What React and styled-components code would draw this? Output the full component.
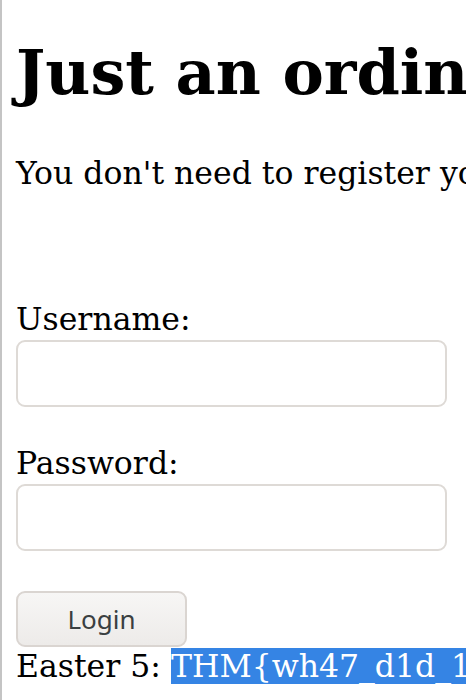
import styled, { createGlobalStyle } from "styled-components";

const GlobalStyle = createGlobalStyle`
  html {
    overflow: hidden;
    background: #ffffff;
    border-left: 2px solid #c4c4c4;
  }
  body {
    margin: 0;
    font-family: "DejaVu Serif", serif;
    color: #000;
  }
`;

const Page = styled.div`
  width: 1400px;
  padding: 0 16px 16px 14px;
`;

const Heading = styled.h1`
  margin: 37px 0 0;
  font-size: 62px;
  line-height: 72px;
  font-weight: bold;
  white-space: nowrap;
`;

const Intro = styled.p`
  margin: 46px 0 0;
  font-size: 31.5px;
  line-height: 37px;
  white-space: nowrap;
`;

const Form = styled.form`
  display: flex;
  flex-direction: column;
  align-items: flex-start;
  margin-top: 109px;
`;

const Label = styled.label`
  font-size: 31.5px;
  line-height: 37px;
`;

const Input = styled.input`
  box-sizing: border-box;
  width: 431px;
  height: 67px;
  margin: 2px 0 38px;
  border: 2px solid #dedad6;
  border-radius: 9px;
  background: #fff;
  outline: none;
`;

const Button = styled.button`
  box-sizing: border-box;
  width: 171px;
  height: 56px;
  margin-top: 2px;
  padding: 0;
  border: 2px solid #dad5d1;
  border-radius: 9px;
  background: linear-gradient(#f7f6f5, #edebe9);
  color: #3a3f41;
  font-family: "Noto Sans", sans-serif;
  font-size: 26px;
`;

const Easter = styled.div`
  font-size: 31.5px;
  line-height: 39px;
  white-space: nowrap;
`;

const Selected = styled.span`
  background: #3584e4;
  color: #ffffff;
`;

export default function App() {
  return (
    <Page>
      <GlobalStyle />
      <Heading>Just an ordinary login page</Heading>
      <Intro>You don't need to register yourself</Intro>
      <Form onSubmit={(e) => e.preventDefault()}>
        <Label htmlFor="username">Username:</Label>
        <Input id="username" type="text" />
        <Label htmlFor="password">Password:</Label>
        <Input id="password" type="password" />
        <Button type="submit">Login</Button>
      </Form>
      <Easter>
        Easter 5: <Selected>THM{"{"}wh47_d1d_1_jus7_s33{"}"}</Selected>
      </Easter>
    </Page>
  );
}
